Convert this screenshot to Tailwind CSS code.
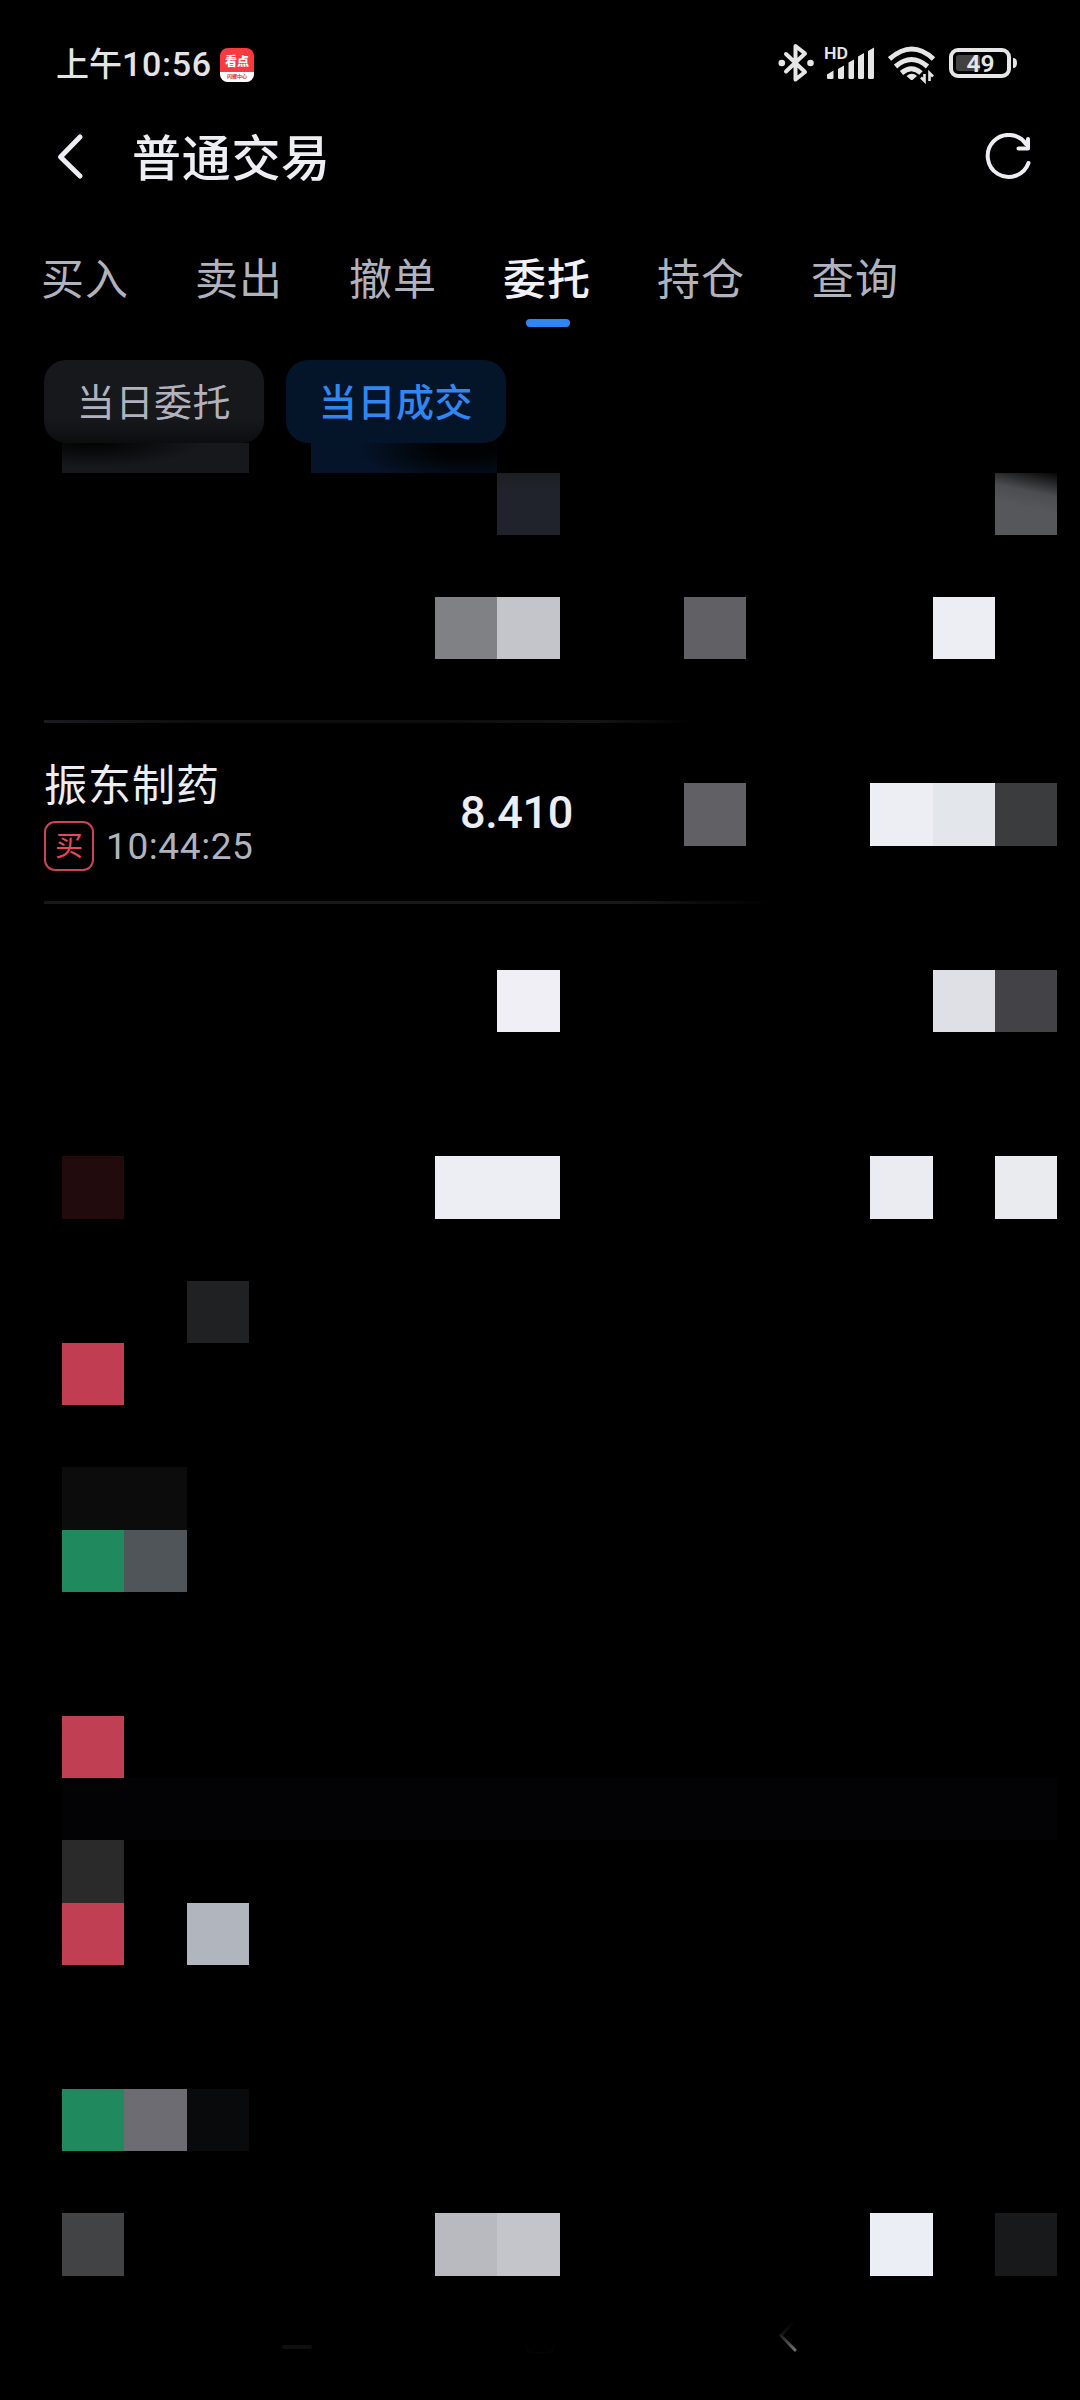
<!DOCTYPE html>
<html lang="zh-CN">
<head>
  <meta charset="UTF-8" />
  <meta name="viewport" content="width=device-width, initial-scale=1.0"/>
  <title>普通交易</title>
  <script src="https://cdn.jsdelivr.net/npm/@tailwindcss/browser@4"></script>
</head>
<body class="bg-black text-[#ededf4] w-[1080px] h-[2400px] overflow-hidden font-[Roboto,'Noto_Sans_CJK_SC',sans-serif]">

  <!-- Status bar -->
  <div class="h-[124px] pt-[42px] pl-[56px] pr-[62px] flex justify-between items-start">
    <div class="flex items-center h-[42px]">
      <span class="pt-[2px] text-[33px] leading-[42px] font-medium text-[#e4e4e4] w-[164px] whitespace-nowrap">上午<span class="text-[34px] tracking-[0.700px]">10:56</span></span>
      <div class="w-[34px] h-[34px] mt-[3px] rounded-[8px] overflow-hidden bg-[#fb3a40] flex flex-col items-center">
        <span class="h-[24px] pt-[4px] text-[12px] leading-[20px] font-black text-white">看点</span>
        <span class="h-[10px] w-full bg-white text-center text-[5px] leading-[9px] font-bold text-[#d8323a]">闪耀中心</span>
      </div>
    </div>
    <div class="flex h-[42px] text-[#e6e6e6]">
      <!-- Bluetooth -->
      <svg class="w-[37px] h-[42px]" viewBox="0 0 37 42" fill="none" stroke="currentColor" stroke-width="4" stroke-linejoin="round" stroke-linecap="round">
        <path d="M8 12L27 30L17.500 37.500V4L27 11.500L8 29.500"/>
        <circle cx="3.800" cy="21" r="3.300" fill="currentColor" stroke="none"/>
        <circle cx="32.500" cy="21" r="3.300" fill="currentColor" stroke="none"/>
      </svg>
      <!-- HD signal -->
      <svg class="w-[51px] h-[42px] ml-[9px]" viewBox="0 0 51 42" fill="currentColor">
        <text x="0" y="17" font-size="16.500" font-weight="600" textLength="24" lengthAdjust="spacingAndGlyphs">HD</text>
        <path d="M3 32.500L9.500 28.500V35.500Q9.500 37 8 37H4.500Q3 37 3 35.500ZM14 27L20 23.500V35.500Q20 37 18.500 37H15.500Q14 37 14 35.500ZM24.500 20.500L30 17.500V35.500Q30 37 28.500 37H26Q24.500 37 24.500 35.500ZM34 14.500L40 11V35.500Q40 37 38.500 37H35.500Q34 37 34 35.500ZM44 9L50 5.500V35.500Q50 37 48.500 37H45.500Q44 37 44 35.500Z"/>
      </svg>
      <!-- Wifi -->
      <svg class="w-[48px] h-[42px] ml-[13px]" viewBox="0 0 48 42" fill="none" stroke="currentColor" stroke-width="5">
        <path d="M1.500 17Q24 -3 45.500 17M7.500 24.500Q23.500 10.500 39.500 24.500M13.500 31Q23.500 22.500 33 31"/>
        <path d="M18.500 34Q24 29.500 29 34L24.500 38H23Z" fill="currentColor" stroke="none"/>
        <path d="M36.500 32V39L33 35.500M41.500 39V31L45 34.500" stroke-width="2.600"/>
      </svg>
      <!-- Battery -->
      <svg class="w-[70px] h-[42px] ml-[12px]" viewBox="-1 0 70 42">
        <rect x="2" y="8" width="58" height="26" rx="7" fill="none" stroke="currentColor" stroke-width="4"/>
        <rect x="7" y="13" width="24" height="16" rx="3" fill="#424242"/>
        <path d="M64 16Q68 16 68 21Q68 26 64 26Z" fill="currentColor"/>
        <text x="31.500" y="30" text-anchor="middle" font-size="24" font-weight="600" textLength="28" lengthAdjust="spacingAndGlyphs" fill="currentColor">49</text>
      </svg>
    </div>
  </div>

  <!-- Title bar -->
  <header class="h-[68px] pl-[56px] pr-[45px] flex items-center">
    <svg class="w-[28px] h-[50px]" viewBox="0 0 28 50" fill="none" stroke="currentColor" stroke-width="5" stroke-linecap="round" stroke-linejoin="round">
      <path d="M24 4L4.500 24L24 43"/>
    </svg>
    <h1 class="ml-[48px] pt-[3px] text-[49px] leading-[68px] font-medium tracking-[0.700px]">普通交易</h1>
    <svg class="w-[50px] h-[50px] ml-auto" viewBox="0 0 50 50" fill="none" stroke="currentColor" stroke-width="4" stroke-linecap="round" stroke-linejoin="round">
      <path d="M43.500 30A21 21 0 1 1 41 11"/>
      <path d="M43 6V15.500H33.500"/>
    </svg>
  </header>

  <!-- Tabs -->
  <nav class="h-[168px] pt-[55px] pl-[41px] flex gap-[66px] text-[43px] leading-[66px] tracking-[1px] text-[#b0b3bd]">
    <span class="w-[88px]">买入</span>
    <span class="w-[88px]">卖出</span>
    <span class="w-[88px]">撤单</span>
    <div class="w-[88px] flex flex-col items-center">
      <span class="font-medium text-[#f0f0f6]">委托</span>
      <i class="mt-[6px] ml-[1px] w-[44px] h-[8px] rounded-full bg-[#2e86f5]"></i>
    </div>
    <span class="w-[88px]">持仓</span>
    <span class="w-[88px]">查询</span>
  </nav>

  <!-- Sub tabs -->
  <div class="h-[83px] pl-[44px] flex gap-[22px] text-[38px] leading-[80px] tracking-[0.600px] text-center">
    <button class="w-[220px] pt-[3px] rounded-[22px] bg-[linear-gradient(to_bottom,#17181c_70%,#0c0d0f)] text-[#b0b3bd]">当日委托</button>
    <button class="w-[220px] pt-[3px] rounded-[22px] bg-[#051529] text-[#3186f2] font-medium">当日成交</button>
  </div>
  <div class="h-[30px] pl-[62px] flex gap-[62px]">
    <div class="w-[187px] bg-[radial-gradient(ellipse_110px_24px_at_30px_0,#020202,#17181c)]"></div>
    <div class="w-[186px] bg-[radial-gradient(ellipse_110px_36px_at_155px_6px,#010203_25%,#06142a)]"></div>
  </div>

  <!-- Orders -->
  <main>
    <div class="pl-[62px] h-[62px] grid grid-cols-[62px_63px_62px_62px_62px_62px_62px_63px_62px_62px_62px_62px_62px_63px_62px_62px]">
      <div class="col-start-8 bg-[linear-gradient(to_bottom,#1d1f23,#20232b_30%)]"></div>
      <div class="col-start-16 bg-[linear-gradient(192deg,#050505,#4b4d50_32%,#55575a_55%)]"></div>
    </div>

    <div class="mt-[62px] pl-[62px] h-[62px] grid grid-cols-[62px_63px_62px_62px_62px_62px_62px_63px_62px_62px_62px_62px_62px_63px_62px_62px]">
      <div class="col-start-7 bg-[#808184]"></div>
      <div class="col-start-8 bg-[#c4c5ca]"></div>
      <div class="col-start-11 bg-[#616064]"></div>
      <div class="col-start-15 bg-[#edeef4]"></div>
    </div>

    <div class="mt-[61px] ml-[44px] w-[650px] h-[3px] bg-[linear-gradient(to_right,#1b1b20,#0d0d0e_25%,#0d0d0e_60%,#151517_85%,#000)]"></div>

    <div class="h-[178px] flex">
      <div class="pl-[44px] w-[435px] pt-[31px]">
        <p class="text-[43px] leading-[64px] tracking-[1px]">振东制药</p>
        <div class="mt-[2px] flex items-center">
          <span class="w-[50px] h-[50px] rounded-[11px] border-2 border-[#cc4257] text-[#e5485f] text-[28px] leading-[47px] text-center">买</span>
          <span class="ml-[12px] pt-[2px] text-[37px] leading-[50px] tracking-[0.600px] text-[#b0b3bd]">10:44:25</span>
        </div>
      </div>
      <p class="w-[249px] pl-[25px] pt-[59px] text-[45px] leading-[62px] font-medium tracking-[-0.400px]">8.410</p>
      <div class="mt-[60px] h-[63px] grid grid-cols-[62px_62px_62px_63px_62px_62px]">
        <div class="bg-[#616064]"></div>
        <div class="col-start-4 bg-[#edeef4]"></div>
        <div class="bg-[#e3e7eb]"></div>
        <div class="bg-[#3b3c3e]"></div>
      </div>
    </div>

    <div class="ml-[44px] w-[730px] h-[3px] bg-[linear-gradient(to_right,#18181a_80%,#000)]"></div>

    <div class="mt-[66px] pl-[62px] h-[62px] grid grid-cols-[62px_63px_62px_62px_62px_62px_62px_63px_62px_62px_62px_62px_62px_63px_62px_62px]">
      <div class="col-start-8 bg-[#efeff5]"></div>
      <div class="col-start-15 bg-[#dfe0e5]"></div>
      <div class="col-start-16 bg-[#434247]"></div>
    </div>

    <div class="mt-[124px] pl-[62px] h-[63px] grid grid-cols-[62px_63px_62px_62px_62px_62px_62px_63px_62px_62px_62px_62px_62px_63px_62px_62px]">
      <div class="col-start-1 bg-[#210b0d]"></div>
      <div class="col-start-7 bg-[#edeef4]"></div>
      <div class="col-start-8 bg-[#edeef4]"></div>
      <div class="col-start-14 bg-[#ebecf2]"></div>
      <div class="col-start-16 bg-[#e9ebee]"></div>
    </div>

    <div class="mt-[62px] pl-[187px] h-[62px]"><div class="w-[62px] h-full bg-[#202123]"></div></div>
    <div class="pl-[62px] h-[62px]"><div class="w-[62px] h-full bg-[#c03d52]"></div></div>

    <div class="mt-[62px] pl-[62px] h-[63px]"><div class="w-[125px] h-full bg-[#0c0c0c]"></div></div>
    <div class="pl-[62px] h-[62px] flex">
      <div class="w-[62px] bg-[#21895e]"></div>
      <div class="w-[63px] bg-[#505559]"></div>
    </div>

    <div class="mt-[124px] pl-[62px] h-[62px]"><div class="w-[62px] h-full bg-[#c13f52]"></div></div>
    <div class="pl-[62px] h-[62px]"><div class="w-[995px] h-full bg-[#030305]"></div></div>
    <div class="pl-[62px] h-[63px]"><div class="w-[62px] h-full bg-[#2a2a2a]"></div></div>
    <div class="pl-[62px] h-[62px] flex gap-[63px]">
      <div class="w-[62px] bg-[#c13f53]"></div>
      <div class="w-[62px] bg-[#b0b5be]"></div>
    </div>

    <div class="mt-[124px] pl-[62px] h-[62px] flex">
      <div class="w-[62px] bg-[#21895e]"></div>
      <div class="w-[63px] bg-[#6c6c72]"></div>
      <div class="w-[62px] bg-[#090a0c]"></div>
    </div>

    <div class="mt-[62px] pl-[62px] h-[63px] grid grid-cols-[62px_63px_62px_62px_62px_62px_62px_63px_62px_62px_62px_62px_62px_63px_62px_62px]">
      <div class="col-start-1 bg-[#424345]"></div>
      <div class="col-start-7 bg-[#b9babf]"></div>
      <div class="col-start-8 bg-[#c4c5ca]"></div>
      <div class="col-start-14 bg-[#ebeef4]"></div>
      <div class="col-start-16 bg-[#18191b]"></div>
    </div>
  </main>

  <!-- System navigation -->
  <footer class="mt-[40px] pl-[282px] h-[40px] flex">
    <svg class="w-[30px] h-[40px]" viewBox="0 0 30 40"><rect y="29" width="30" height="4" rx="2" fill="#0f0f0f"/></svg>
    <svg class="w-[30px] h-[40px] ml-[213px]" viewBox="0 0 30 40" fill="none" stroke="#040404" stroke-width="2"><path d="M1 28Q1 37 8 37H22Q29 37 29 28"/></svg>
    <svg class="w-[20px] h-[40px] ml-[222px]" viewBox="0 0 20 40" fill="none" stroke-width="3" stroke-linecap="round">
      <defs>
        <linearGradient id="back" x1="0" y1="5" x2="0" y2="35" gradientUnits="userSpaceOnUse">
          <stop offset="0" stop-color="#000"/>
          <stop offset=".4" stop-color="#121212"/>
          <stop offset="1" stop-color="#777"/>
        </linearGradient>
      </defs>
      <path d="M16 6L4 19.500L18 34" stroke="url(#back)"/>
    </svg>
  </footer>

</body>
</html>
